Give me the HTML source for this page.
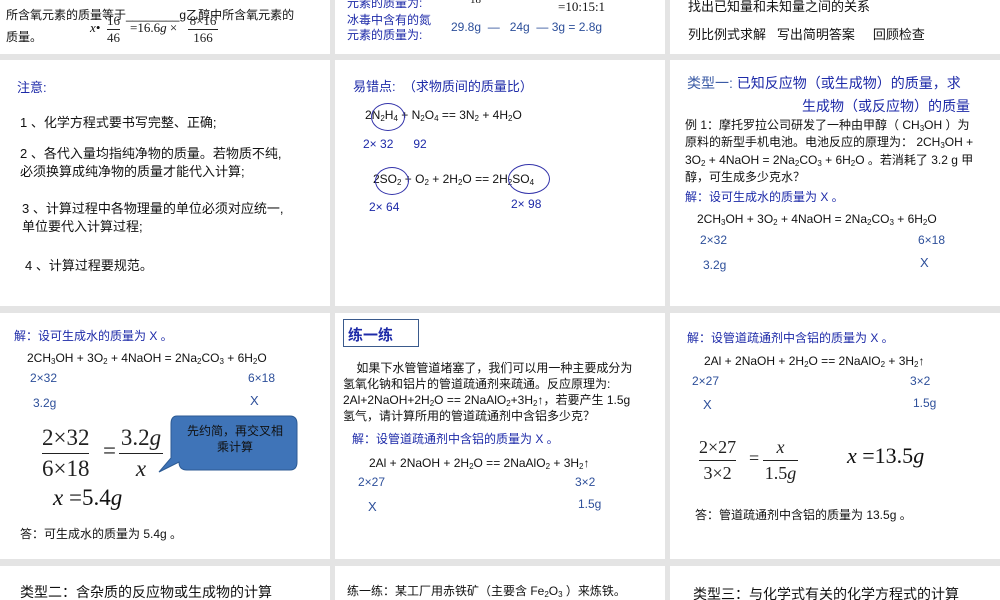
<!DOCTYPE html>
<html><head><meta charset="utf-8"><style>
body{margin:0;width:1000px;height:600px;background:#e4e4e4;position:relative;overflow:hidden;font-family:"Liberation Sans","Noto Sans CJK SC",sans-serif;}
.p{position:absolute;background:#fff;overflow:hidden}
.t{position:absolute;white-space:nowrap;font-size:12.5px;color:#111}
.b{color:#1d2aa8}
.bl{color:#2d4f9a}
.s{font-family:"Liberation Serif","Noto Serif CJK SC",serif}
sub{font-size:8px;vertical-align:-2px;line-height:0}
.fr{position:absolute;font-family:"Liberation Serif",serif;color:#222;text-align:center}
.fr .n{border-bottom:1px solid #222;display:block}
</style></head><body>
<!-- row1 -->
<div class="p" style="left:0;top:0;width:330px;height:54px">
<div class="t" style="left:6px;top:6px;font-size:12px">所含氧元素的质量等于________g乙醇中所含氧元素的</div>
<div class="t" style="left:6px;top:28px;font-size:12px">质量。</div>
<div class="t s" style="left:90px;top:20px;font-size:13px;font-style:italic">x•</div>
<div class="fr" style="left:107px;top:13px;font-size:13px"><span class="n">16</span>46</div>
<div class="t s" style="left:130px;top:20px;font-size:13px">=16.6<i>g</i> ×</div>
<div class="fr" style="left:188px;top:13px;font-size:13px;width:30px"><span class="n">8×16</span>166</div>
</div>
<div class="p" style="left:335px;top:0;width:330px;height:54px">
<div class="t b" style="left:12px;top:-6px;font-size:12px">元素的质量为:</div>
<div class="t s" style="left:135px;top:-6px;font-size:11px">18</div>
<div class="t s" style="left:223px;top:-1px;font-size:13px">=10:15:1</div>
<div class="t b" style="left:12px;top:13px;font-size:12px;line-height:15px">冰毒中含有的氮<br>元素的质量为:</div>
<div class="t bl" style="left:116px;top:20px;font-size:12px">29.8g &nbsp;— &nbsp; 24g &nbsp;— 3g = 2.8g</div>
</div>
<div class="p" style="left:670px;top:0;width:330px;height:54px">
<div class="t" style="left:18px;top:-4px;font-size:13px">找出已知量和未知量之间的关系</div>
<div class="t" style="left:18px;top:24px;font-size:13px">列比例式求解 &nbsp;&nbsp;写出简明答案 &nbsp;&nbsp;&nbsp;&nbsp;回顾检查</div>
</div>
<!-- row2 -->
<div class="p" style="left:0;top:60px;width:330px;height:246px">
<div class="t b" style="left:17px;top:17px;font-size:13px">注意:</div>
<div class="t" style="left:20px;top:52px;font-size:13px">1 、化学方程式要书写完整、正确;</div>
<div class="t" style="left:20px;top:85px;font-size:13px;line-height:18px">2 、各代入量均指纯净物的质量。若物质不纯,<br>必须换算成纯净物的质量才能代入计算;</div>
<div class="t" style="left:22px;top:140px;font-size:13px;line-height:18px">3 、计算过程中各物理量的单位必须对应统一,<br>单位要代入计算过程;</div>
<div class="t" style="left:25px;top:195px;font-size:13px">4 、计算过程要规范。</div>
</div>
<div class="p" style="left:335px;top:60px;width:330px;height:246px">
<div class="t b" style="left:18px;top:16px;font-size:13px">易错点: &nbsp;（求物质间的质量比）</div>
<div class="t" style="left:30px;top:48px;font-size:12px">2N<sub>2</sub>H<sub>4</sub> + N<sub>2</sub>O<sub>4</sub> == 3N<sub>2</sub> + 4H<sub>2</sub>O</div>
<div style="position:absolute;left:36px;top:43px;width:32px;height:26px;border:1px solid #33a;border-radius:50%"></div>
<div class="t b" style="left:28px;top:77px;font-size:12px">2× 32 &nbsp;&nbsp;&nbsp;&nbsp;&nbsp;92</div>
<div class="t" style="left:38px;top:112px;font-size:12px">2SO<sub>2</sub> + O<sub>2</sub> + 2H<sub>2</sub>O == 2H<sub>2</sub>SO<sub>4</sub></div>
<div style="position:absolute;left:40px;top:107px;width:32px;height:26px;border:1px solid #33a;border-radius:50%"></div>
<div style="position:absolute;left:173px;top:104px;width:40px;height:28px;border:1px solid #33a;border-radius:50%"></div>
<div class="t b" style="left:34px;top:140px;font-size:12px">2× 64</div>
<div class="t b" style="left:176px;top:137px;font-size:12px">2× 98</div>
</div>
<div class="p" style="left:670px;top:60px;width:330px;height:246px">
<div class="t b" style="left:17px;top:13px;font-size:14px"><span style="color:#3b5ba5">类型一:</span> 已知反应物（或生成物）的质量，求</div>
<div class="t b" style="left:132px;top:36px;font-size:14px">生成物（或反应物）的质量</div>
<div class="t" style="left:15px;top:57px;font-size:12px;line-height:17.3px">例 1：摩托罗拉公司研发了一种由甲醇（ CH<sub>3</sub>OH ）为<br>原料的新型手机电池。电池反应的原理为： 2CH<sub>3</sub>OH +<br>3O<sub>2</sub> + 4NaOH = 2Na<sub>2</sub>CO<sub>3</sub> + 6H<sub>2</sub>O 。若消耗了 3.2 g 甲<br>醇，可生成多少克水？</div>
<div class="t b" style="left:15px;top:128px;font-size:12px">解：设可生成水的质量为 X 。</div>
<div class="t" style="left:27px;top:152px;font-size:12px">2CH<sub>3</sub>OH + 3O<sub>2</sub> + 4NaOH = 2Na<sub>2</sub>CO<sub>3</sub> + 6H<sub>2</sub>O</div>
<div class="t bl" style="left:30px;top:173px;font-size:12px">2×32</div>
<div class="t bl" style="left:248px;top:173px;font-size:12px">6×18</div>
<div class="t bl" style="left:33px;top:198px;font-size:12px">3.2g</div>
<div class="t bl" style="left:250px;top:195px;font-size:13px">X</div>
</div>
<!-- row3 -->
<div class="p" style="left:0;top:313px;width:330px;height:246px">
<div class="t b" style="left:14px;top:14px;font-size:12px">解：设可生成水的质量为 X 。</div>
<div class="t" style="left:27px;top:38px;font-size:12px">2CH<sub>3</sub>OH + 3O<sub>2</sub> + 4NaOH = 2Na<sub>2</sub>CO<sub>3</sub> + 6H<sub>2</sub>O</div>
<div class="t bl" style="left:30px;top:58px;font-size:12px">2×32</div>
<div class="t bl" style="left:248px;top:58px;font-size:12px">6×18</div>
<div class="t bl" style="left:33px;top:83px;font-size:12px">3.2g</div>
<div class="t bl" style="left:250px;top:80px;font-size:13px">X</div>
<div class="fr" style="left:42px;top:110px;font-size:23px;line-height:30px"><span class="n">2×32</span>6×18</div>
<div class="t s" style="left:103px;top:125px;font-size:23px">=</div>
<div class="fr" style="left:119px;top:110px;font-size:23px;line-height:30px;width:44px"><span class="n">3.2<i>g</i></span><i>x</i></div>
<svg style="position:absolute;left:155px;top:95px" width="145" height="70"><path d="M22 8 Q16 8 16 16 L16 50 L4 64 L24 54 Q24 62 32 62 L135 62 Q142 62 142 54 L142 16 Q142 8 135 8 Z" fill="#3f74b8" stroke="#2c5a93" stroke-width="1"/></svg>
<div class="t" style="left:170px;top:110px;width:130px;text-align:center;font-size:12px;line-height:16px">先约简，再交叉相<br>乘计算</div>
<div class="t s" style="left:53px;top:172px;font-size:23px"><i>x</i> =5.4<i>g</i></div>
<div class="t" style="left:20px;top:212px;font-size:12px">答：可生成水的质量为 5.4g 。</div>
</div>
<div class="p" style="left:335px;top:313px;width:330px;height:246px">
<div style="position:absolute;left:8px;top:6px;width:76px;height:28px;border:1px solid #3a5a8c;box-sizing:border-box"></div>
<div class="t b" style="left:13px;top:11px;font-size:15px;font-weight:bold">练一练</div>
<div class="t" style="left:8px;top:47px;font-size:12px;line-height:16px">&nbsp;&nbsp;&nbsp;&nbsp;如果下水管管道堵塞了，我们可以用一种主要成分为<br>氢氧化钠和铝片的管道疏通剂来疏通。反应原理为:<br>2Al+2NaOH+2H<sub>2</sub>O == 2NaAlO<sub>2</sub>+3H<sub>2</sub>↑，若要产生 1.5g<br>氢气，请计算所用的管道疏通剂中含铝多少克？</div>
<div class="t b" style="left:17px;top:117px;font-size:12px">解：设管道疏通剂中含铝的质量为 X 。</div>
<div class="t" style="left:34px;top:143px;font-size:12px">2Al + 2NaOH + 2H<sub>2</sub>O == 2NaAlO<sub>2</sub> + 3H<sub>2</sub>↑</div>
<div class="t bl" style="left:23px;top:162px;font-size:12px">2×27</div>
<div class="t bl" style="left:240px;top:162px;font-size:12px">3×2</div>
<div class="t bl" style="left:33px;top:186px;font-size:13px">X</div>
<div class="t bl" style="left:243px;top:184px;font-size:12px">1.5g</div>
</div>
<div class="p" style="left:670px;top:313px;width:330px;height:246px">
<div class="t b" style="left:17px;top:16px;font-size:12px">解：设管道疏通剂中含铝的质量为 X 。</div>
<div class="t" style="left:34px;top:41px;font-size:12px">2Al + 2NaOH + 2H<sub>2</sub>O == 2NaAlO<sub>2</sub> + 3H<sub>2</sub>↑</div>
<div class="t bl" style="left:22px;top:61px;font-size:12px">2×27</div>
<div class="t bl" style="left:240px;top:61px;font-size:12px">3×2</div>
<div class="t bl" style="left:33px;top:84px;font-size:13px">X</div>
<div class="t bl" style="left:243px;top:83px;font-size:12px">1.5g</div>
<div class="fr" style="left:29px;top:122px;font-size:18px;line-height:25px"><span class="n">2×27</span>3×2</div>
<div class="t s" style="left:79px;top:135px;font-size:18px">=</div>
<div class="fr" style="left:93px;top:122px;font-size:18px;line-height:25px;width:35px"><span class="n"><i>x</i></span>1.5<i>g</i></div>
<div class="t s" style="left:177px;top:130px;font-size:22px"><i>x</i> =13.5<i>g</i></div>
<div class="t" style="left:25px;top:193px;font-size:12px">答：管道疏通剂中含铝的质量为 13.5g 。</div>
</div>
<!-- row4 -->
<div class="p" style="left:0;top:566px;width:330px;height:34px">
<div class="t" style="left:20px;top:16px;font-size:14px">类型二：含杂质的反应物或生成物的计算</div>
</div>
<div class="p" style="left:335px;top:566px;width:330px;height:34px">
<div class="t" style="left:12px;top:16px;font-size:12px">练一练：某工厂用赤铁矿（主要含 Fe<sub>2</sub>O<sub>3</sub> ）来炼铁。</div>
</div>
<div class="p" style="left:670px;top:566px;width:330px;height:34px">
<div class="t" style="left:23px;top:18px;font-size:14px">类型三：与化学式有关的化学方程式的计算</div>
</div>
</body></html>
